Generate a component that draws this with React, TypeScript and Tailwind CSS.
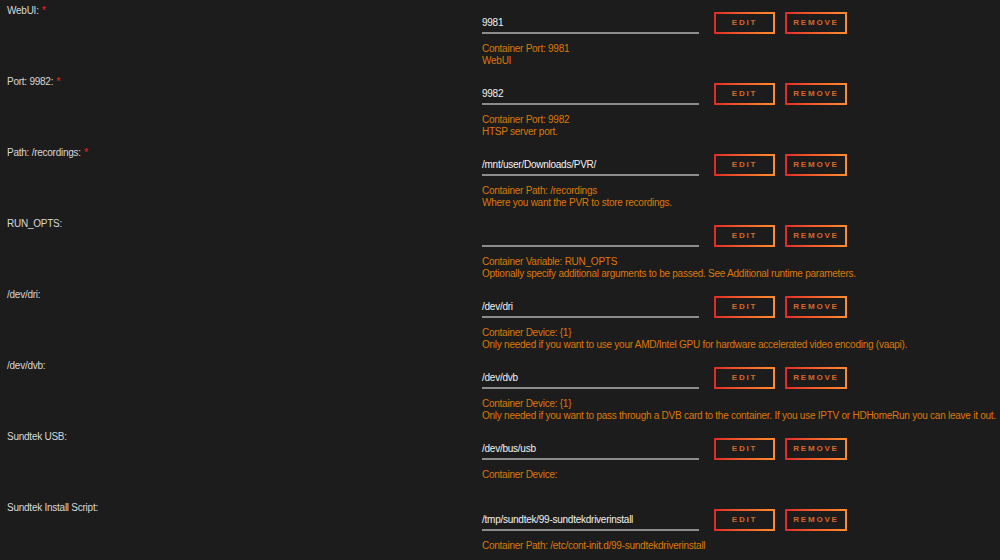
import React from "react";

type Row = { label: string; req?: boolean; value: string; desc: string[] };

const rows: Row[] = [
  { label: "WebUI:", req: true, value: "9981", desc: ["Container Port: 9981", "WebUI"] },
  { label: "Port: 9982:", req: true, value: "9982", desc: ["Container Port: 9982", "HTSP server port."] },
  { label: "Path: /recordings:", req: true, value: "/mnt/user/Downloads/PVR/", desc: ["Container Path: /recordings", "Where you want the PVR to store recordings."] },
  { label: "RUN_OPTS:", value: "", desc: ["Container Variable: RUN_OPTS", "Optionally specify additional arguments to be passed. See Additional runtime parameters."] },
  { label: "/dev/dri:", value: "/dev/dri", desc: ["Container Device: {1}", "Only needed if you want to use your AMD/Intel GPU for hardware accelerated video encoding (vaapi)."] },
  { label: "/dev/dvb:", value: "/dev/dvb", desc: ["Container Device: {1}", "Only needed if you want to pass through a DVB card to the container. If you use IPTV or HDHomeRun you can leave it out."] },
  { label: "Sundtek USB:", value: "/dev/bus/usb", desc: ["Container Device:"] },
  { label: "Sundtek Install Script:", value: "/tmp/sundtek/99-sundtekdriverinstall", desc: ["Container Path: /etc/cont-init.d/99-sundtekdriverinstall"] },
];

function Btn({ text, w }: { text: string; w: string }) {
  return (
    <div className={`bg-gradient-to-r from-[#e22828] to-[#ff8c2f] p-[2px] h-[22px] ${w}`}>
      <div className="h-full w-full bg-[#1c1c1c] flex items-center justify-center">
        <span className="text-[8px] font-bold tracking-[1.8px] text-[#d8682a] leading-none">{text}</span>
      </div>
    </div>
  );
}

export default function App() {
  return (
    <div
      className="w-[1000px] h-[560px] bg-[#1c1c1c] overflow-hidden"
      style={{ fontFamily: '"Liberation Sans", Arial, sans-serif' }}
    >
      {rows.map((r, i) => (
        <div key={i} className="flex h-[71px]">
          <div className="w-[482px] pl-[7px] pt-[5px] text-[10px] leading-[12px] text-[#d8d8d8] tracking-[-0.25px]">
            {r.label}
            {r.req && <span className="text-[#e22828] text-[11px] align-top ml-[3px] leading-[10px]">*</span>}
          </div>
          <div className="flex flex-col">
            <div className="flex items-start mt-[12px] h-[22px]">
              <div className="w-[217px] h-[22px] pt-[2px] border-b-[2px] border-[#8c8c8c] text-[10px] text-[#f2f2f2] leading-[18px] tracking-[-0.25px]">
                {r.value}
              </div>
              <div className="ml-[15px]">
                <Btn text="EDIT" w="w-[61px]" />
              </div>
              <div className="ml-[10px]">
                <Btn text="REMOVE" w="w-[62px]" />
              </div>
            </div>
            <div className="mt-[9px] text-[10px] leading-[12px] text-[#dc780a] tracking-[-0.25px] whitespace-nowrap">
              {r.desc.map((d, j) => (
                <div key={j}>{d}</div>
              ))}
            </div>
          </div>
        </div>
      ))}
    </div>
  );
}
